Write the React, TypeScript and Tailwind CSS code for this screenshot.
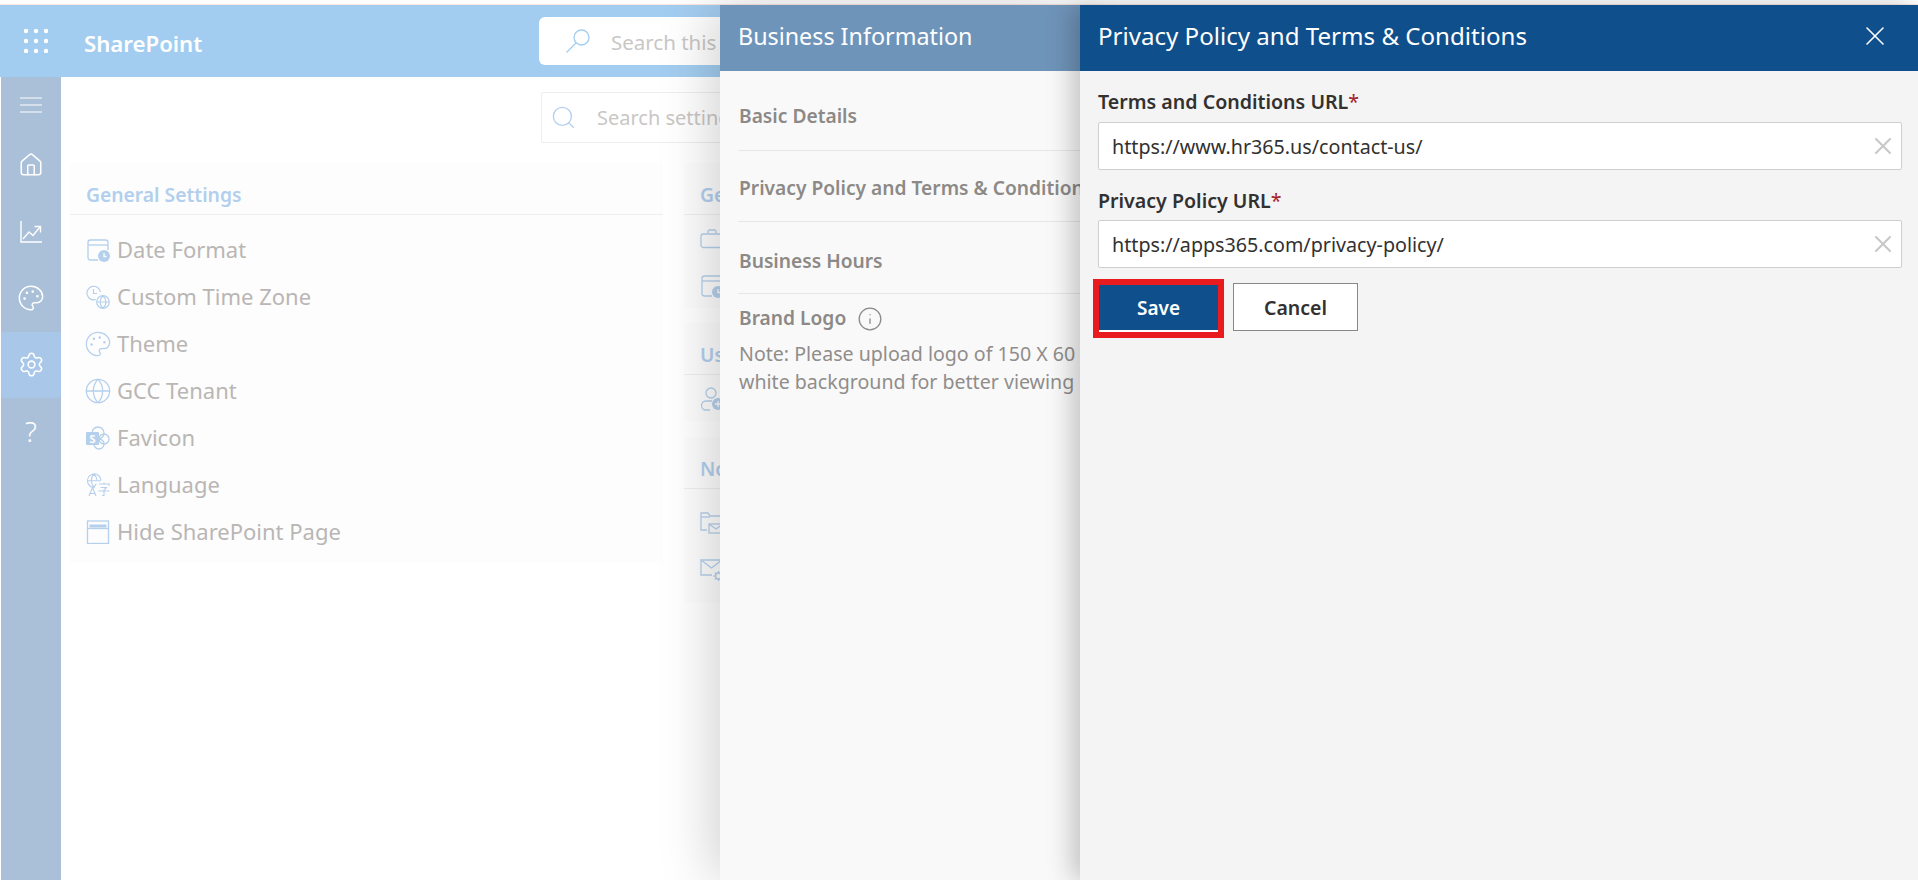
import React from "react";
import { House, Palette, Settings, Search, X, Info, Globe } from "lucide-react";

const FONT = "font-['Noto_Sans','Open_Sans',sans-serif]";

const CalendarClockIcon = () => (
  <svg viewBox="0 0 24 24" className="w-6 h-6 shrink-0" fill="none" stroke="#b5d0ec" strokeWidth="1.3">
    <path d="M12 22H4.500A2.500 2.500 0 0 1 2 19.500V4.500A2.500 2.500 0 0 1 4.500 2h15A2.500 2.500 0 0 1 22 4.500V12" />
    <path d="M2 7h20" />
    <circle cx="18" cy="18" r="6" fill="#b5d0ec" stroke="none" />
    <path d="M18 15v3.500h2.500" stroke="#fdfdfd" />
  </svg>
);

const TimeZoneIcon = () => (
  <svg viewBox="0 0 24 24" className="w-6 h-6 shrink-0" fill="none" stroke="#b5d0ec" strokeWidth="1.2">
    <path d="M10 14.500A6.800 6.800 0 1 1 14.500 7" />
    <path d="M7.500 4v4.500H11" />
    <circle cx="17" cy="17" r="6.300" />
    <path d="M10.700 17h12.600M17 10.700c-4 3.800-4 8.800 0 12.600c4-3.800 4-8.800 0-12.600" />
  </svg>
);

const SharePointIcon = () => (
  <svg viewBox="0 0 24 24" className="w-6 h-6 shrink-0" fill="none" stroke="#b5d0ec" strokeWidth="1.3">
    <circle cx="12" cy="7" r="6" />
    <circle cx="18" cy="13" r="5" />
    <circle cx="13" cy="18" r="5" />
    <rect x="0" y="6" width="13" height="13" rx="1" fill="#b5d0ec" stroke="none" />
    <text x="6.500" y="16.500" textAnchor="middle" fontSize="11" fontWeight="700" fill="#fdfdfd" stroke="none">S</text>
  </svg>
);

const LanguageIcon = () => (
  <svg viewBox="0 0 24 24" className="w-6 h-6 shrink-0" fill="none" stroke="#b5d0ec" strokeWidth="1.1">
    <path d="M8.500 14.500A6.800 6.800 0 1 1 15 7" />
    <path d="M1.500 7.700H15M8 1c-3.500 3.500-3.500 9.500 0 13c1-1 1.700-2 2.200-3.200M8 1c1.800 1.800 2.800 4 3 6" />
    <path d="M3 23l3.500-8.500L10 23M4.300 20.500h4.400" />
    <path d="M13 11h10v2M18 9.500V11M14.500 14.500h6l-2.500 2.500v5.500h-2M12.500 18h11" />
  </svg>
);

const PageIcon = () => (
  <svg viewBox="0 0 24 24" className="w-6 h-6 shrink-0" fill="none" stroke="#b5d0ec" strokeWidth="1.3">
    <rect x="1.500" y="1" width="21" height="22.500" />
    <rect x="3.500" y="4.500" width="17" height="3" fill="#b5d0ec" stroke="none" />
    <path d="M1.500 8.500h21" />
  </svg>
);

const BriefcaseIcon = () => (
  <svg viewBox="0 0 24 24" className="w-6 h-6 shrink-0" fill="none" stroke="#b5d0ec" strokeWidth="1.3">
    <rect x="1" y="7" width="22" height="13.500" rx="2.500" />
    <path d="M8 7V4.500A1.500 1.500 0 0 1 9.500 3h5A1.500 1.500 0 0 1 16 4.500V7" />
  </svg>
);

const UserAddIcon = () => (
  <svg viewBox="0 0 24 24" className="w-6 h-6 shrink-0" fill="none" stroke="#b5d0ec" strokeWidth="1.3">
    <circle cx="11" cy="6" r="5" />
    <path d="M10 23H6a4 4 0 0 1 0-9h6" />
    <circle cx="18" cy="17" r="6" fill="#b5d0ec" stroke="none" />
    <path d="M18 14v6M15 17h6" stroke="#fdfdfd" />
  </svg>
);

const FolderMailIcon = () => (
  <svg viewBox="0 0 24 24" className="w-6 h-6 shrink-0" fill="none" stroke="#b5d0ec" strokeWidth="1.3">
    <path d="M7 19H1V2h7l2 3h13v6" />
    <path d="M1 6h9" />
    <rect x="9" y="13" width="14" height="9" />
    <path d="M9 13l7 5 7-5" />
  </svg>
);

const MailGearIcon = () => (
  <svg viewBox="0 0 24 24" className="w-6 h-6 shrink-0" fill="none" stroke="#b5d0ec" strokeWidth="1.3">
    <path d="M12 17H1V2h21v9" />
    <path d="M1 2l10.500 8L22 2" />
    <circle cx="18.500" cy="18" r="3" />
    <path d="M18.500 13v2M18.500 21v2M13.500 18h2M21.500 18h2M15 14.500l1.400 1.400M20.600 20.100l1.400 1.400M15 21.500l1.400-1.400M20.600 15.900l1.400-1.400" />
  </svg>
);

const iconCls = "w-[28px] h-[28px] -mx-[2px] shrink-0 text-[#b5d0ec]";

const generalRows: { label: string; icon: React.ReactNode }[] = [
  { label: "Date Format", icon: <CalendarClockIcon /> },
  { label: "Custom Time Zone", icon: <TimeZoneIcon /> },
  { label: "Theme", icon: <Palette className={iconCls} strokeWidth={1.1} /> },
  { label: "GCC Tenant", icon: <Globe className={iconCls} strokeWidth={1.1} /> },
  { label: "Favicon", icon: <SharePointIcon /> },
  { label: "Language", icon: <LanguageIcon /> },
  { label: "Hide SharePoint Page", icon: <PageIcon /> },
];

const SideItem = ({ active, children }: { active?: boolean; children: React.ReactNode }) => (
  <div className={`h-[66.500px] flex items-center justify-center text-white ${active ? "bg-[#a9c7e8] rounded-[2px]" : ""}`}>
    {children}
  </div>
);

const Row = ({ label, icon }: { label: string; icon: React.ReactNode }) => (
  <div className="h-[47px] flex items-center gap-[7px] pl-[16px] text-[22px] text-[#b9b6b4] whitespace-nowrap">
    {icon}
    <span>{label}</span>
  </div>
);

const CardHead = ({ children }: { children: React.ReactNode }) => (
  <div className="h-[52px] flex items-center pl-[16px] pt-[14px] border-b border-[#eeeeee] text-[19.300px] font-semibold text-[#b2cfee] whitespace-nowrap">
    {children}
  </div>
);

const ClearField = ({ value }: { value: string }) => (
  <div className="h-[48px] bg-white border border-[#cfcfcf] rounded-[2px] flex items-center justify-between pl-[13px] pr-[4px] text-[19.700px] text-[#323130]">
    <span className="pt-[2px]">{value}</span>
    <X className="w-[28px] h-[28px] text-[#c8c8c8]" strokeWidth={1.800} />
  </div>
);

export default function App() {
  return (
    <div className={`relative w-[1918px] h-[880px] overflow-hidden bg-white ${FONT}`}>
      {/* faint strip at the very top */}
      <div className="h-[5px] bg-white border-b border-[#fbe6e0]" />

      <header className="h-[72px] bg-[#a3cdf0] flex items-center text-white">
        <div className="w-[71px] flex justify-center">
          <svg width="24" height="24" viewBox="0 0 24 24" fill="#ffffff">
            {[2, 12, 22].map((cy) =>
              [2, 12, 22].map((cx) => <circle key={`${cx}-${cy}`} cx={cx} cy={cy} r="2.200" />)
            )}
          </svg>
        </div>
        <span className="ml-[13px] w-[117px] pt-[5px] text-[22.200px] font-semibold">SharePoint</span>
        <div className="ml-[338px] w-[400px] h-[48px] bg-white rounded-[6px] flex items-center pl-[27px] gap-[21px] text-[20.500px] text-[#c9c7c5]">
          <svg width="24" height="24" viewBox="0 0 24 24" fill="none" stroke="#a3cdf0" strokeWidth="1.300">
            <circle cx="15.500" cy="8.500" r="7.500" />
            <path d="M10 14L0.500 23.500" />
          </svg>
          <span className="pt-[2px]">Search this site</span>
        </div>
      </header>

      <div className="flex h-[803px]">
        <aside className="w-[60px] ml-px bg-[#aabfd8] shrink-0">
          <div className="h-[55px] flex items-center justify-center">
            <svg width="22" height="16" viewBox="0 0 22 16" stroke="#ffffff" strokeWidth="1.200">
              <path d="M0 1h22M0 8h22M0 15h22" />
            </svg>
          </div>
          <SideItem><House className="w-[26px] h-[26px]" strokeWidth={1.400} /></SideItem>
          <SideItem>
            <svg width="22" height="22" viewBox="0 0 22 22" fill="none" stroke="#ffffff" strokeWidth="1.400">
              <path d="M1 0v21h21" />
              <path d="M3 18l6-7 4 3.500L20 6" />
              <path d="M14.500 5.500h6v6" />
            </svg>
          </SideItem>
          <SideItem><Palette className="w-[28px] h-[28px]" strokeWidth={1.300} /></SideItem>
          <SideItem active><Settings className="w-[27px] h-[27px]" strokeWidth={1.400} /></SideItem>
          <SideItem><span className="text-[28px] font-light">?</span></SideItem>
        </aside>

        <main className="flex-1 pl-[9px]">
          <div className="pt-[15px] pl-[471px]">
            <div className="w-[400px] h-[51px] bg-white border border-[#eeeeee] rounded-[2px] flex items-center pl-[8px] gap-[20px] text-[20px] text-[#c9c7c5]">
              <Search className="w-[27px] h-[27px] text-[#b5d0ec]" strokeWidth={1.200} />
              <span>Search settings</span>
            </div>
          </div>

          <div className="flex gap-[21px] mt-[20px]">
            <section className="w-[593px] h-[400px] bg-[#fdfdfd]">
              <CardHead>General Settings</CardHead>
              <div className="pt-[11px]">
                {generalRows.map((r) => <Row key={r.label} {...r} />)}
              </div>
            </section>

            <div className="w-[400px] flex flex-col">
              <section className="h-[145px] bg-[#fdfdfd]">
                <CardHead>General</CardHead>
                <Row label="Business" icon={<BriefcaseIcon />} />
                <Row label="Calendar" icon={<CalendarClockIcon />} />
              </section>
              <section className="h-[98px] mt-[15px] bg-[#fdfdfd]">
                <CardHead>Users</CardHead>
                <Row label="User Access" icon={<UserAddIcon />} />
              </section>
              <section className="h-[166px] mt-[16px] bg-[#fdfdfd]">
                <CardHead>Notifications</CardHead>
                <div className="pt-[10px]">
                  <Row label="Mail Folder" icon={<FolderMailIcon />} />
                  <Row label="Mail Settings" icon={<MailGearIcon />} />
                </div>
              </section>
            </div>
          </div>
        </main>
      </div>

      {/* first slide-over panel */}
      <div className="absolute left-[720px] top-[5px] bottom-0 w-[360px] bg-[#f9f9f9] shadow-[-8px_0_50px_rgba(0,0,0,0.18)] overflow-hidden">
        <div className="h-[66px] bg-[#6f94b9] flex items-center pl-[18px] text-[23.300px] text-white pb-[4px]">
          Business Information
        </div>
        <div className="pl-[19px] text-[19.200px] font-semibold text-[#8c8987] whitespace-nowrap">
          <div className="h-[80px] pt-[31px] -ml-px pl-px border-b border-[#e6e6e6]">Basic Details</div>
          <div className="h-[71px] pt-[23px] -ml-px pl-px border-b border-[#e6e6e6]">Privacy Policy and Terms &amp; Conditions</div>
          <div className="h-[72px] pt-[25px] -ml-px pl-px border-b border-[#e6e6e6]">Business Hours</div>
          <div className="flex items-center gap-[11px] pt-[3px] h-[46px]">
            Brand Logo
            <Info className="w-[26px] h-[26px]" strokeWidth={1.200} />
          </div>
          <div className="text-[19.600px] leading-[28px] font-normal text-[#908d8b]">
            Note: Please upload logo of 150 X 60 pixels<br />
            white background for better viewing
          </div>
        </div>
      </div>

      {/* second slide-over panel */}
      <div className="absolute left-[1080px] right-0 top-[5px] bottom-0 bg-[#f4f4f4] shadow-[-8px_0_24px_rgba(0,0,0,0.22)]">
        <div className="h-[66px] bg-[#0f4f8b] flex items-center justify-between pl-[18px] pr-[27px] pb-[4px] text-white">
          <span className="text-[24.100px]">Privacy Policy and Terms &amp; Conditions</span>
          <X className="w-[32px] h-[32px]" strokeWidth={1.200} />
        </div>
        <div className="pl-[18px] pr-[16px] pt-[16px]">
          <div className="h-[35px] text-[19.600px] font-semibold text-[#323130] whitespace-nowrap">
            Terms and Conditions URL<span className="text-[#a4262c] font-normal">*</span>
          </div>
          <ClearField value="https://www.hr365.us/contact-us/" />
          <div className="h-[34px] mt-[16px] text-[19.600px] font-semibold text-[#323130] whitespace-nowrap">
            Privacy Policy URL<span className="text-[#a4262c] font-normal">*</span>
          </div>
          <ClearField value="https://apps365.com/privacy-policy/" />
          <div className="flex items-start gap-[15px] mt-[15px]">
            <button className="w-[119px] h-[47px] mt-[2px] pt-[2px] ml-px bg-[#0f4f8b] border-b-2 border-white text-white text-[19px] font-semibold outline-[6px] outline-[#e81c1f]">
              Save
            </button>
            <button className="w-[125px] h-[48px] pt-[2px] bg-white border border-[#8a8886] text-[19.500px] font-semibold text-[#323130]">
              Cancel
            </button>
          </div>
        </div>
      </div>
    </div>
  );
}
